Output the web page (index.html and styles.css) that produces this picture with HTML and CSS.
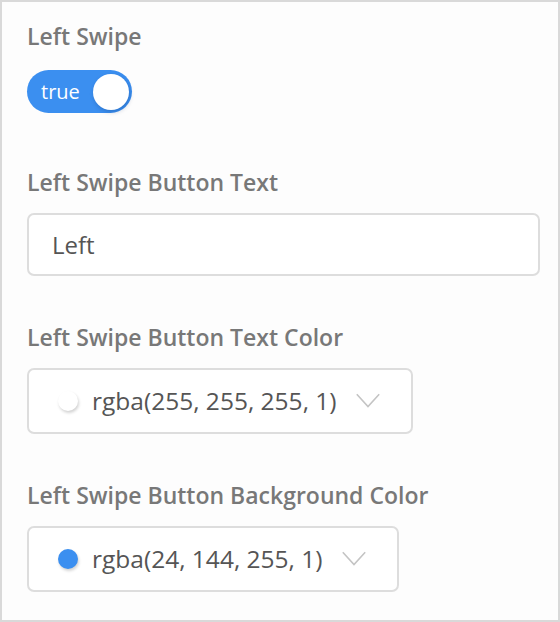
FILE: index.html
```html
<!DOCTYPE html>
<html>
<head>
<meta charset="utf-8">
<link rel="stylesheet" href="styles.css">
</head>
<body>
<div class="panel">
  <div class="field field-switch">
    <div class="label">Left Swipe</div>
    <div class="switch"><span class="switch-text">true</span><span class="knob"></span></div>
  </div>
  <div class="field">
    <div class="label">Left Swipe Button Text</div>
    <div class="input">Left</div>
  </div>
  <div class="field">
    <div class="label">Left Swipe Button Text Color</div>
    <div class="select">
      <span class="swatch swatch-white"></span>
      <span class="value">rgba(255, 255, 255, 1)</span>
      <svg class="chevron" width="24" height="15" viewBox="0 0 24 15"><polyline points="0.8,1.2 12,13.5 23.2,1.2" fill="none" stroke="#c4c4c4" stroke-width="1.6"/></svg>
    </div>
  </div>
  <div class="field">
    <div class="label">Left Swipe Button Background Color</div>
    <div class="select">
      <span class="swatch swatch-blue"></span>
      <span class="value">rgba(24, 144, 255, 1)</span>
      <svg class="chevron" width="24" height="15" viewBox="0 0 24 15"><polyline points="0.8,1.2 12,13.5 23.2,1.2" fill="none" stroke="#c4c4c4" stroke-width="1.6"/></svg>
    </div>
  </div>
</div>
</body>
</html>
```

FILE: styles.css
```css
html, body {
  margin: 0;
  padding: 0;
  background: #fdfdfd;
}
.panel {
  box-sizing: border-box;
  width: 560px;
  height: 622px;
  border: 2px solid #d9d9d9;
  background: #fdfdfd;
  padding: 20px 18px 0 25px;
  font-family: "Open Sans", "Liberation Sans", sans-serif;
}
.field {
  margin-bottom: 47.5px;
}
.field-switch {
  margin-bottom: 55px;
}
.label {
  font-size: 23px;
  font-weight: 600;
  color: #787878;
  line-height: 28px;
  margin-bottom: 16.5px;
}
.field-switch .label {
  margin-bottom: 20px;
}
.switch {
  display: flex;
  align-items: center;
  box-sizing: border-box;
  width: 105px;
  height: 43px;
  border-radius: 22px;
  background: #3b8ff0;
  padding: 0 3px 0 14px;
  justify-content: space-between;
}
.switch-text {
  color: #ffffff;
  font-size: 20px;
  line-height: 1;
}
.knob {
  width: 36px;
  height: 36px;
  border-radius: 50%;
  background: #ffffff;
  box-shadow: 1px 2px 4px rgba(0, 40, 100, 0.25);
}
.input {
  box-sizing: border-box;
  height: 63px;
  border: 2px solid #dddddd;
  border-radius: 7px;
  background: #ffffff;
  display: flex;
  align-items: center;
  padding-left: 23px;
  font-size: 24px;
  color: #555555;
}
.select {
  box-sizing: border-box;
  display: inline-flex;
  align-items: center;
  height: 66px;
  border: 2px solid #dddddd;
  border-radius: 7px;
  background: #ffffff;
  padding: 0 31px 0 29px;
  font-size: 24.5px;
  color: #555555;
}
.swatch {
  width: 20px;
  height: 20px;
  border-radius: 50%;
  margin-right: 14px;
  box-shadow: 1px 2px 3px rgba(0, 0, 0, 0.18);
}
.swatch-white {
  background: #ffffff;
}
.swatch-blue {
  background: #3b8ff0;
}
.chevron {
  margin-left: 19px;
}
```
